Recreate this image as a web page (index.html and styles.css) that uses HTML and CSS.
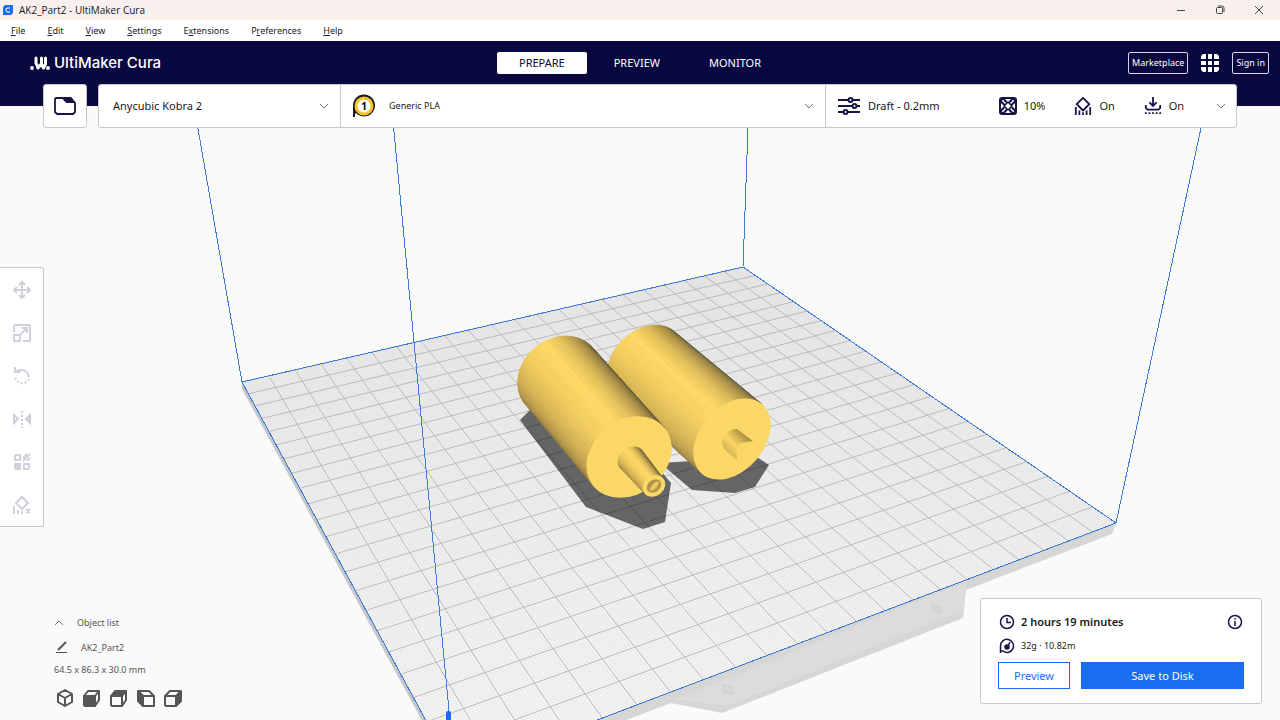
FILE: index.html
```html
<!DOCTYPE html>
<html lang="en">
<head>
  <meta charset="UTF-8" />
  <meta name="viewport" content="width=device-width, initial-scale=1" />
  <title>AK2_Part2 - UltiMaker Cura</title>
  <link rel="stylesheet" href="styles.css">
</head>
<body>

  <svg class="scene" viewBox="0 0 1280 720" preserveAspectRatio="xMidYMid slice" aria-label="Build plate">
    <linearGradient id="peg" x1="0" y1="1" x2="1" y2="0">
      <stop offset="0" stop-color="#b3954a"/><stop offset=".45" stop-color="#fbd765"/><stop offset=".9" stop-color="#8c753c"/>
    </linearGradient>
    <!-- plate underside -->
    <path fill="#d6d6d6" d="M1116 523l-4 11-146 56-3 28-241 95-51-10-47 18-170 66V774z"/>
    <path fill="#dcdcdc" d="M966 582l-2 28-238 96-50-7z"/>
    <path fill="#c4c6c9" d="M242 382v7l184 339 29 46z"/>
    <g fill="#d8d8d8" stroke="#cecece"><path d="M932 605v6l9 2v-6z"/><path d="M723 685v7l9 2v-7z"/></g>
    <g id="plate"></g>
    <path fill="#000" fill-opacity=".57" d="M520 420l10-10 130 60 11 13-6 39-22 7-57-22z"/>
    <path fill="#000" fill-opacity=".57" d="M660 463l32 27 43 3 20-6 14-22-12-8z"/>
    <g id="model"></g>
    <path fill="url(#peg)" d="M722 444c1-9 7-15 15-15l16 12-12 2-4 4v13l-12-10z"/>
    <g class="volume">
      <path d="M242 382L743 267 1116 523 455 774z"/>
      <path d="M193 100L242 382M391 100L455 774M749 100L743 267M1207 100L1116 523"/>
    </g>
    <rect x="446" y="711" width="5" height="12" rx="2" fill="#196ef0"/>
  </svg>

  <div class="titlebar">
    <svg width="10" height="10" viewBox="0 0 10 10"><path fill="#196ef0" d="M2 0h8v8l-2 2H0V2z"/><path fill="none" stroke="#fff" d="M7 3H4L3 4v2l1 1h3"/></svg>
    <span class="title">AK2_Part2 - UltiMaker Cura</span>
    <div class="window-buttons">
      <button aria-label="Minimize"><svg width="10" height="10"><path d="M1 5.500h8"/></svg></button>
      <button aria-label="Restore"><svg width="10" height="10"><rect x="1.500" y="2.500" width="6" height="6" rx="1"/><path d="M3 1h4a2 2 0 0 1 2 2v4"/></svg></button>
      <button aria-label="Close"><svg width="10" height="10"><path d="M1 1l8 8M9 1l-8 8"/></svg></button>
    </div>
  </div>

  <nav class="menubar">
    <a href="#"><u>F</u>ile</a>
    <a href="#"><u>E</u>dit</a>
    <a href="#"><u>V</u>iew</a>
    <a href="#"><u>S</u>ettings</a>
    <a href="#">E<u>x</u>tensions</a>
    <a href="#">P<u>r</u>eferences</a>
    <a href="#"><u>H</u>elp</a>
  </nav>

  <header class="header">
    <div class="brand">
      <svg width="20" height="14" viewBox="0 0 20 14" fill="none" stroke="#fff" stroke-width="3" stroke-linecap="round" stroke-linejoin="round"><path d="M6 2v5l2 5 2-3M11.500 2v6l2 4M11.500 8L10 10M15.500 2v6l-2 4M8 12l1-2"/><path stroke-width="3.800" d="M2 12h.01M18 12h.01"/></svg>
      <span>UltiMaker Cura</span>
    </div>
    <div class="stages">
      <button class="stage active">PREPARE</button>
      <button class="stage">PREVIEW</button>
      <button class="stage">MONITOR</button>
    </div>
    <div class="account">
      <button class="outline">Marketplace</button>
      <button class="apps" aria-label="Applications">
        <svg width="18" height="18" viewBox="0 0 18 18" fill="#fff"><path d="M2 0h3v5H0V2zM7 0h4v5H7zM13 0h3l2 2v3h-5zM0 7h5v4H0zM7 7h4v4H7zM13 7h5v4h-5zM0 13h5v5H2l-2-2zM7 13h4v5H7zM13 13h5v3l-2 2h-3z"/></svg>
      </button>
      <button class="outline">Sign in</button>
    </div>
  </header>

  <div class="stage-menu">
    <button class="open-file" aria-label="Open file">
      <svg width="24" height="22" viewBox="0 0 24 22" fill="none" stroke="#171447" stroke-width="1.800" stroke-linejoin="round"><path d="M2 17V4l1-1h7l4 4h7l1 1v9l-2 2H4z"/><path fill="#171447" d="M10 3h8l3 4h-7z"/></svg>
    </button>
    <div class="settings">
      <button class="printer">Anycubic Kobra 2
        <svg class="chevron" width="10" height="6"><path d="M1 1l4 4 4-4"/></svg>
      </button>
      <button class="material">
        <svg width="24" height="24" viewBox="0 0 24 24"><path fill="#1c1b1b" d="M1 23V12a11 11 0 1 1 3 7l-1 1v3z"/><circle cx="12" cy="12" r="9.500" fill="#f7c32e"/><circle cx="12" cy="12" r="6.500" fill="#fff"/><text x="12" y="16" text-anchor="middle">1</text></svg>
        <span>Generic PLA</span>
        <svg class="chevron" width="10" height="6"><path d="M1 1l4 4 4-4"/></svg>
      </button>
      <button class="profile">
        <svg width="24" height="20" viewBox="0 0 24 20" fill="none" stroke="#171447" stroke-width="2"><path d="M1 4h10M16 4h7M1 10h14M20 10h3M1 16h5M11 16h12"/><circle cx="13.500" cy="4" r="2"/><circle cx="17.500" cy="10" r="2"/><circle cx="8.500" cy="16" r="2"/></svg>
        <span class="quality">Draft - 0.2mm</span>
        <svg width="18" height="18" viewBox="0 0 18 18"><rect width="18" height="18" rx="3" fill="#171447"/><path fill="#fff" d="M9 6l3 3-3 3-3-3zM6 2h6L9 5zM6 16h6l-3-3zM2 6v6l3-3zM16 6v6l-3-3zM3 3h1l3 3-1 1-3-3zM15 3h-1l-3 3 1 1 3-3zM3 15h1l3-3-1-1-3 3zM15 15h-1l-3-3 1-1 3 3z"/></svg>
        <span class="infill">10%</span>
        <svg width="18" height="18" viewBox="0 0 20 20" fill="none" stroke="#171447" stroke-width="2"><path stroke-linejoin="round" d="M10 1l7 7-7 7-7-7z"/><path d="M2 11v9M18 11v9M6 15v5M14 15v5M10 17v3"/></svg>
        <span class="support">On</span>
        <svg width="18" height="18" viewBox="0 0 20 20" fill="none" stroke="#171447" stroke-width="2"><path d="M10 0v10M6 6l4 4 4-4M2 9v3l2 2h12l2-2V9"/><path stroke-dasharray="2 2" d="M1 18h18"/></svg>
        <span>On</span>
        <svg class="chevron" width="10" height="6"><path d="M1 1l4 4 4-4"/></svg>
      </button>
    </div>
  </div>

  <main class="view">
    <div class="toolbar">
      <button aria-label="Move"><svg viewBox="0 0 18 18"><path d="M9 2v14M2 9h14M6 4l3-3 3 3M6 14l3 3 3-3M4 6L1 9l3 3M14 6l3 3-3 3"/></svg></button>
      <button aria-label="Scale"><svg viewBox="0 0 18 18"><path d="M1 8V2l1-1h14l1 1v14l-1 1h-6M1 11h6v6H1zM8 10l6-6M9 4h5v5"/></svg></button>
      <button aria-label="Rotate"><svg viewBox="0 0 18 18"><path d="M2 0v5h5M2 5c5-4 13-2 14 5"/><path class="dots" d="M16 12c-2 6-13 6-14-2"/></svg></button>
      <button aria-label="Mirror"><svg viewBox="0 0 18 18"><path d="M1 5l4 4-4 4z"/><path class="solid" d="M17 5l-4 4 4 4z"/><path class="dots" d="M9 1v17"/></svg></button>
      <button aria-label="Per model settings"><svg viewBox="0 0 18 18"><path d="M3 2h4v5H2V3zM11 11h5v4l-1 1h-4zM10 5l4-4M10 8l7-7M14 8l3-3"/><path class="solid" d="M2 11h5v5H3l-1-1z"/></svg></button>
      <button aria-label="Support blocker"><svg viewBox="0 0 18 18"><path d="M9 1l6 6-6 6-6-6zM1 10v8M5 14v4M9 15v3M13 13l4 4M17 13l-4 4"/></svg></button>
    </div>

    <div class="bottom">
      <div class="objects">
        <button class="row list-toggle"><svg class="chevron" width="10" height="6"><path d="M1 5l4-4 4 4"/></svg>Object list</button>
        <button class="row name"><svg width="13" height="13" viewBox="0 0 13 13"><path fill="none" stroke="#555" stroke-width="2" d="M3 9l8-8"/><path stroke="#555" d="M1 11.500h11"/></svg>AK2_Part2</button>
        <p>64.5 x 86.3 x 30.0 mm</p>
        <div class="cameras">
          <button aria-label="3D view"><svg viewBox="0 0 18 18"><path d="M9 1l7 4v8l-7 4-7-4V5zM2 5l7 4 7-4M9 9v8"/></svg></button>
          <button aria-label="Front view"><svg viewBox="0 0 18 18"><path d="M1 7l4-5h11v9l-4 6M12 7l4-5"/><path class="face" d="M1 7h11v10H2l-1-1z"/></svg></button>
          <button aria-label="Top view"><svg viewBox="0 0 18 18"><path d="M1 7v9l1 1h10l4-6V2M12 7v10"/><path class="face" d="M1 7l4-5h11l-4 5z"/></svg></button>
          <button aria-label="Left view"><svg viewBox="0 0 18 18"><path d="M1 2h11l5 5v10H6V7h11M6 7L1 2"/><path class="face" d="M1 2l5 5v10l-5-5z"/></svg></button>
          <button aria-label="Right view"><svg viewBox="0 0 18 18"><path d="M12 17H2l-1-1V7l5-5h10M1 7h11"/><path class="face" d="M12 7l5-5v10l-5 5z"/></svg></button>
        </div>
      </div>

      <div class="action-panel">
        <div class="estimate">
          <svg width="16" height="16" viewBox="0 0 16 16" fill="none" stroke="#171447" stroke-width="1.500"><circle cx="8" cy="8" r="6.500"/><path d="M8 4v4.500h4"/></svg>
          <strong>2 hours 19 minutes</strong>
          <button class="info" aria-label="Details"><svg width="16" height="16" viewBox="0 0 16 16" fill="none" stroke="#171447" stroke-width="1.500"><circle cx="8" cy="8" r="6.500"/><path d="M8 7v5M8 4v1.500"/></svg></button>
        </div>
        <div class="estimate">
          <svg width="16" height="16" viewBox="0 0 16 16" fill="none" stroke="#171447" stroke-width="1.500"><path d="M1.500 15V8a6.500 6.500 0 1 1 2.500 5H2"/><circle cx="8" cy="9" r="2" fill="#171447"/><path d="M9 8l2-4"/></svg>
          <span>32g · 10.82m</span>
        </div>
        <div class="actions">
          <button class="preview">Preview</button>
          <button class="save">Save to Disk</button>
        </div>
      </div>
    </div>
  </main>

  <script src="scene.js"></script>
</body>
</html>
```
FILE: styles.css
```css
* {
  box-sizing: border-box;
}
body {
  margin: 0;
  min-height: 100vh;
  display: flex;
  flex-direction: column;
  position: relative;
  overflow: hidden;
  background: #fafafa;
  color: #191919;
  font-family: "Noto Sans", sans-serif;
  font-size: 11px;
  line-height: 16px;
}
button {
  margin: 0;
  padding: 0;
  border: 0;
  background: none;
  color: inherit;
  font: inherit;
  cursor: pointer;
}
svg {
  display: block;
  flex: none;
}

/* 3D view */
.scene {
  position: absolute;
  inset: 0;
  width: 100%;
  height: 100%;
  z-index: -1;
}
.base {
  fill: url(#base);
}
.minor {
  fill: none;
  stroke: #d0d0d0;
  stroke-width: 1;
  stroke-opacity: 0.2;
}
.major {
  fill: none;
  stroke: #b9b9b9;
  stroke-width: 1;
}
.volume {
  fill: none;
  stroke: #3c7cd6;
  stroke-width: 1;
  shape-rendering: crispEdges;
}

/* Window frame */
.titlebar {
  display: flex;
  align-items: center;
  height: 20px;
  padding-left: 3px;
  background: #f8f0ed;
  font-family: "Open Sans", sans-serif;
  font-size: 10px;
}
.title {
  margin-left: 6px;
}
.window-buttons {
  display: flex;
  margin-left: auto;
  padding-right: 2px;
}
.window-buttons button {
  width: 39px;
  display: flex;
  justify-content: center;
}
.window-buttons svg {
  fill: none;
  stroke: #444;
}
.menubar {
  display: flex;
  gap: 22px;
  align-items: center;
  height: 21px;
  padding-left: 11px;
  background: #fff;
  font-size: 9px;
}
.menubar a {
  color: #222;
  text-decoration: none;
}

/* Header */
.header {
  display: grid;
  grid-template-columns: 1fr auto 1fr;
  align-items: center;
  height: 43px;
  padding: 0 11px;
  background: #08073f;
  color: #fff;
}
.brand {
  display: flex;
  align-items: center;
  gap: 4px;
  margin-left: 19px;
  font-family: Inter, sans-serif;
  font-size: 15px;
  font-weight: 500;
}
.stages {
  display: flex;
  gap: 5px;
}
.stage {
  height: 22px;
  padding: 0 22px;
  border-radius: 2px;
}
.stage.active {
  background: #fff;
  color: #08073f;
}
.account {
  display: flex;
  justify-content: flex-end;
  align-items: center;
  gap: 13px;
  font-size: 9px;
}
.outline {
  height: 22px;
  padding: 0 3px;
  border: 1px solid #d5d5e5;
  border-radius: 2px;
}

.stage-menu {
  display: flex;
  gap: 11px;
  padding: 0 43px;
  background: linear-gradient(#08073f 22px, transparent 22px);
}
.open-file {
  width: 44px;
  height: 44px;
  display: flex;
  align-items: center;
  justify-content: center;
  background: #fff;
  border: 1px solid #c8c8c8;
  border-radius: 3px;
}
.settings {
  flex: 1;
  display: grid;
  grid-template-columns: 241fr 485fr 411fr;
  height: 44px;
  background: #fff;
  border: 1px solid #c8c8c8;
  border-radius: 3px;
}
.settings > button {
  display: flex;
  align-items: center;
  text-align: left;
}
.settings > button + button {
  border-left: 1px solid #c8c8c8;
}
.chevron {
  fill: none;
  stroke: #777;
}
.settings .chevron {
  margin-left: auto;
}
.printer {
  padding: 0 11px 0 14px;
}
.material {
  gap: 13px;
  padding: 0 11px;
  font-size: 9px;
}
.material text {
  font-size: 10px;
  font-weight: bold;
}
.profile {
  gap: 7px;
  padding: 0 10px 0 11px;
}
.quality {
  margin-right: 52px;
}
.infill,
.support {
  margin-right: 22px;
}

/* Main view */
.view {
  flex: 1;
  display: flex;
  flex-direction: column;
  align-items: flex-start;
  padding-top: 139px;
}
.toolbar {
  display: flex;
  flex-direction: column;
  width: 44px;
  background: #fff;
  border: 1px solid #c8c8c8;
  border-left: 0;
  border-radius: 0 3px 3px 0;
}
.toolbar button {
  display: flex;
  align-items: center;
  justify-content: center;
  height: 43px;
}
.toolbar svg {
  width: 18px;
  height: 18px;
  overflow: visible;
  fill: none;
  stroke: #d0d0dc;
  stroke-width: 2;
}
.toolbar .dots {
  stroke-dasharray: 2 2;
}
.toolbar .solid {
  fill: #d0d0dc;
}
.bottom {
  display: flex;
  justify-content: space-between;
  align-items: flex-end;
  width: 100%;
  margin-top: auto;
  padding: 0 18px 0 54px;
}
.objects {
  padding-bottom: 13px;
  color: #555;
  font-size: 9px;
}
.row {
  display: flex;
  align-items: center;
  height: 25px;
}
.list-toggle {
  gap: 13px;
}
.name {
  gap: 13px;
  padding-left: 1px;
}
.objects p {
  margin: 2px 0 11px;
}
.cameras {
  display: flex;
  gap: 9px;
  padding-left: 2px;
}
.cameras svg {
  width: 18px;
  height: 18px;
  fill: none;
  stroke: #555;
  stroke-width: 2;
  stroke-linejoin: round;
}
.cameras .face {
  fill: #555;
}
.action-panel {
  width: 282px;
  margin-bottom: 16px;
  padding: 11px 17px 14px;
  background: #fff;
  border: 1px solid #c8c8c8;
  border-radius: 3px;
}
.estimate {
  display: flex;
  align-items: center;
  gap: 6px;
  height: 24px;
  padding: 0 1px;
  font-size: 9px;
}
.estimate strong {
  font-size: 11px;
  font-weight: 600;
}
.info {
  margin-left: auto;
}
.actions {
  display: flex;
  gap: 11px;
  margin-top: 4px;
}
.actions button {
  height: 27px;
}
.preview {
  width: 72px;
  border: 1px solid #196ef0;
  color: #196ef0;
}
.actions .save {
  flex: 1;
  background: #196ef0;
  color: #fff;
}
```
FILE: scene.js
```js
const NS = 'http://www.w3.org/2000/svg';
const CELLS = 22;

function add(parent, tag, attrs) {
  const el = document.createElementNS(NS, tag);
  for (const key in attrs) el.setAttribute(key, attrs[key]);
  parent.appendChild(el);
  return el;
}

// plate coordinates (0..1) to view coordinates
function project(u, v) {
  const w = 0.1892 * u - 0.3488 * v + 1;
  return [
    ((641.6 * u + 54.3 * v + 242) / w).toFixed(1),
    ((-64.5 * u + 122 * v + 382) / w).toFixed(1)
  ];
}

function gridPath(n, skip) {
  let d = '';
  for (let i = 0; i <= n; i++) {
    if (skip && i % skip === 0) continue;
    const t = i / n;
    d += 'M' + project(t, 0) + 'L' + project(t, 1);
    d += 'M' + project(0, t) + 'L' + project(1, t);
  }
  return d;
}

const plate = document.getElementById('plate');
const gradient = add(plate, 'linearGradient', { id: 'base', x1: 0, y1: 0, x2: 0, y2: 1 });
add(gradient, 'stop', { offset: 0, 'stop-color': '#ebebeb' });
add(gradient, 'stop', { offset: 1, 'stop-color': '#f5f5f5' });
add(plate, 'path', { class: 'base', d: 'M242 382L743 267 1116 523 455 774z' });
add(plate, 'path', { class: 'minor', d: gridPath(CELLS * 10, 10) });
add(plate, 'path', { class: 'major', d: gridPath(CELLS) });

// shade across the visible side of a cylinder, left edge to right edge
const SHADES = [
  [0, 128, 109, 60], [0.1, 170, 143, 70], [0.25, 212, 178, 84], [0.42, 242, 206, 96],
  [0.58, 255, 218, 102], [0.7, 226, 191, 90], [0.82, 176, 149, 73], [0.92, 128, 110, 60], [1, 88, 78, 50]
];

function shade(t) {
  let i = 1;
  while (i < SHADES.length - 1 && SHADES[i][0] < t) i++;
  const a = SHADES[i - 1], b = SHADES[i];
  const k = (t - a[0]) / (b[0] - a[0]);
  return 'rgb(' + [1, 2, 3].map(c => Math.round(a[c] + (b[c] - a[c]) * k)) + ')';
}

function rim(e, angle) {
  const tilt = e.tilt * Math.PI / 180;
  const x = e.rx * Math.cos(angle), y = e.ry * Math.sin(angle);
  return [e.x + x * Math.cos(tilt) - y * Math.sin(tilt), e.y + x * Math.sin(tilt) + y * Math.cos(tilt)];
}

function cylinder(back, front, facets) {
  const model = document.getElementById('model');
  const ax = front.x - back.x, ay = front.y - back.y;
  const len = Math.hypot(ax, ay);
  const side = p => ((p[0] - front.x) * -ay + (p[1] - front.y) * ax) / len;
  let max = 0;
  for (let a = 0; a < 360; a++) max = Math.max(max, Math.abs(side(rim(front, a * Math.PI / 180))));
  add(model, 'ellipse', {
    cx: back.x, cy: back.y, rx: back.rx, ry: back.ry,
    transform: `rotate(${back.tilt} ${back.x} ${back.y})`, fill: '#c9a850'
  });
  for (let i = 0; i < facets; i++) {
    const a = i * 2 * Math.PI / facets, b = (i + 1) * 2 * Math.PI / facets;
    const s1 = side(rim(front, a)), s2 = side(rim(front, b));
    if (s2 > s1) continue; // faces away
    const t = Math.acos(Math.max(-1, Math.min(1, (s1 + s2) / 2 / max))) / Math.PI;
    const color = shade(t);
    add(model, 'path', {
      d: 'M' + [rim(back, a), rim(back, b), rim(front, b), rim(front, a)].join('L') + 'z',
      fill: color, stroke: color, 'stroke-width': 0.6
    });
  }
  add(model, 'ellipse', {
    cx: front.x, cy: front.y, rx: front.rx, ry: front.ry,
    transform: `rotate(${front.tilt} ${front.x} ${front.y})`, fill: '#fbd765'
  });
}

cylinder({ x: 645, y: 363, rx: 43, ry: 32, tilt: -45 }, { x: 732, y: 439, rx: 46, ry: 32, tilt: -49 }, 64);
cylinder({ x: 559, y: 376, rx: 44, ry: 37, tilt: -39 }, { x: 629, y: 457, rx: 46, ry: 37, tilt: -39 }, 64);
cylinder({ x: 631, y: 459, rx: 14, ry: 11, tilt: -39 }, { x: 654, y: 486, rx: 12, ry: 10, tilt: -39 }, 32);

// bore of the shaft
const model = document.getElementById('model');
add(model, 'ellipse', { cx: 654, cy: 486, rx: 8, ry: 6, transform: 'rotate(-39 654 486)', fill: '#b3954a' });
add(model, 'path', { d: 'M650 491c0-5 4-9 9-10-1 6-4 9-9 10z', fill: '#ecc75e' });
```
